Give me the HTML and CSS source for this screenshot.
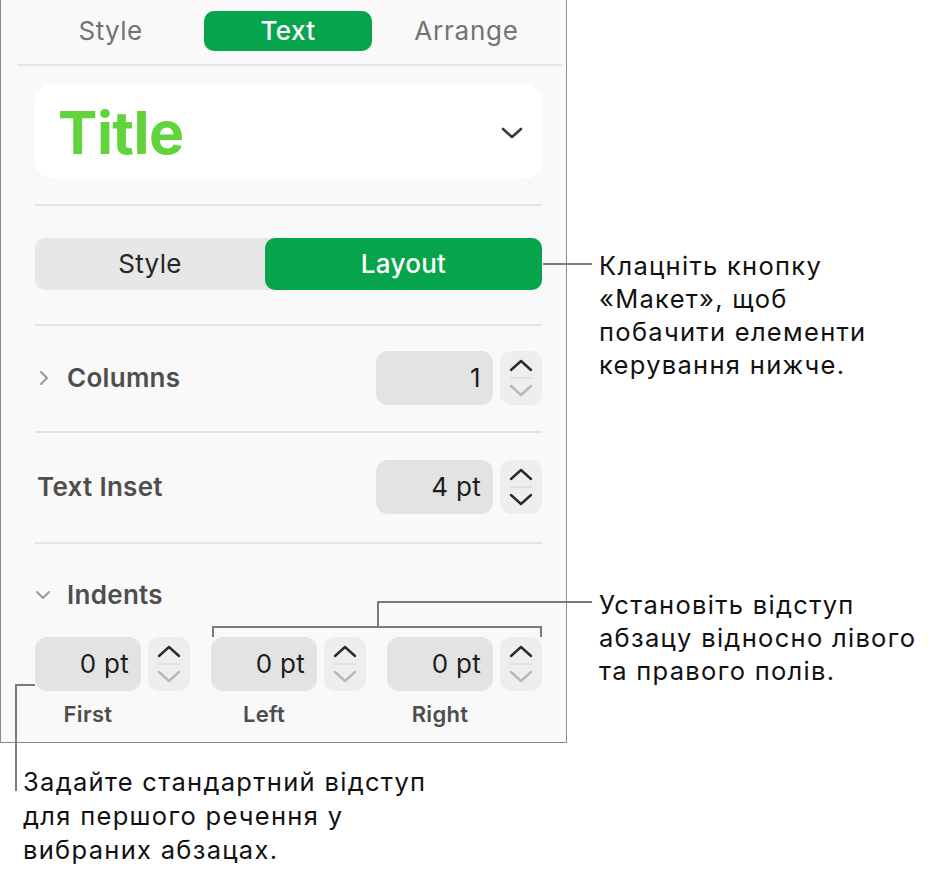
FILE: index.html
```html
<!DOCTYPE html>
<html>
<head>
<meta charset="utf-8">
<link rel="stylesheet" href="styles.css">
</head>
<body>
<div class="stage">
  <div class="panel">
    <div class="tabs">
      <div class="tab">Style</div>
      <div class="tab active">Text</div>
      <div class="tab">Arrange</div>
    </div>
    <div class="inner">
      <div class="title-box">
        <span class="title-text">Title</span>
        <svg class="title-chev" width="22" height="14" viewBox="0 0 22 14"><path d="M2 3 L11 11 L20 3" fill="none" stroke="#3a3a3a" stroke-width="2.6" stroke-linecap="round" stroke-linejoin="round"/></svg>
      </div>
      <div class="sep sep-a"></div>
      <div class="segmented">
        <div class="seg">Style</div>
        <div class="seg on">Layout</div>
      </div>
      <div class="sep sep-b"></div>
      <div class="row row-cols">
        <div class="row-label">
          <svg class="disc" width="14" height="16" viewBox="0 0 14 16"><path d="M4 2 L10 8 L4 14" fill="none" stroke="#9a9a9a" stroke-width="2" stroke-linecap="round" stroke-linejoin="round"/></svg>
          <span>Columns</span>
        </div>
        <div class="ctrl">
          <div class="field wide">1</div>
          <div class="stepper">
            <svg width="30" height="46" viewBox="0 0 30 46"><path d="M5 15 L15 6 L25 15" fill="none" stroke="#2b2b2b" stroke-width="2.4" stroke-linecap="round" stroke-linejoin="round"/><line x1="4" y1="23" x2="26" y2="23" stroke="#dcdcdc" stroke-width="1.5"/><path d="M5 31 L15 40 L25 31" fill="none" stroke="#b9b9b9" stroke-width="2.4" stroke-linecap="round" stroke-linejoin="round"/></svg>
          </div>
        </div>
      </div>
      <div class="sep sep-c"></div>
      <div class="row row-inset">
        <div class="row-label plain"><span>Text Inset</span></div>
        <div class="ctrl">
          <div class="field wide">4 pt</div>
          <div class="stepper">
            <svg width="30" height="46" viewBox="0 0 30 46"><path d="M5 15 L15 6 L25 15" fill="none" stroke="#2b2b2b" stroke-width="2.4" stroke-linecap="round" stroke-linejoin="round"/><line x1="4" y1="23" x2="26" y2="23" stroke="#dcdcdc" stroke-width="1.5"/><path d="M5 31 L15 40 L25 31" fill="none" stroke="#2b2b2b" stroke-width="2.4" stroke-linecap="round" stroke-linejoin="round"/></svg>
          </div>
        </div>
      </div>
      <div class="sep sep-d"></div>
      <div class="row-label indents">
        <svg class="disc" width="16" height="14" viewBox="0 0 16 14"><path d="M2 4 L8 10 L14 4" fill="none" stroke="#9a9a9a" stroke-width="2" stroke-linecap="round" stroke-linejoin="round"/></svg>
        <span>Indents</span>
      </div>
      <div class="indent-row">
        <div class="indent">
          <div class="ctrl">
            <div class="field small">0 pt</div>
            <div class="stepper">
              <svg width="30" height="46" viewBox="0 0 30 46"><path d="M5 15 L15 6 L25 15" fill="none" stroke="#2b2b2b" stroke-width="2.4" stroke-linecap="round" stroke-linejoin="round"/><line x1="4" y1="23" x2="26" y2="23" stroke="#dcdcdc" stroke-width="1.5"/><path d="M5 31 L15 40 L25 31" fill="none" stroke="#b9b9b9" stroke-width="2.4" stroke-linecap="round" stroke-linejoin="round"/></svg>
            </div>
          </div>
          <div class="cap">First</div>
        </div>
        <div class="indent">
          <div class="ctrl">
            <div class="field small">0 pt</div>
            <div class="stepper">
              <svg width="30" height="46" viewBox="0 0 30 46"><path d="M5 15 L15 6 L25 15" fill="none" stroke="#2b2b2b" stroke-width="2.4" stroke-linecap="round" stroke-linejoin="round"/><line x1="4" y1="23" x2="26" y2="23" stroke="#dcdcdc" stroke-width="1.5"/><path d="M5 31 L15 40 L25 31" fill="none" stroke="#b9b9b9" stroke-width="2.4" stroke-linecap="round" stroke-linejoin="round"/></svg>
            </div>
          </div>
          <div class="cap">Left</div>
        </div>
        <div class="indent">
          <div class="ctrl">
            <div class="field small">0 pt</div>
            <div class="stepper">
              <svg width="30" height="46" viewBox="0 0 30 46"><path d="M5 15 L15 6 L25 15" fill="none" stroke="#2b2b2b" stroke-width="2.4" stroke-linecap="round" stroke-linejoin="round"/><line x1="4" y1="23" x2="26" y2="23" stroke="#dcdcdc" stroke-width="1.5"/><path d="M5 31 L15 40 L25 31" fill="none" stroke="#b9b9b9" stroke-width="2.4" stroke-linecap="round" stroke-linejoin="round"/></svg>
            </div>
          </div>
          <div class="cap">Right</div>
        </div>
      </div>
    </div>
  </div>

  <svg class="leaders" width="932" height="881" viewBox="0 0 932 881">
    <g fill="none" stroke="#7a7a7a" stroke-width="2">
      <line x1="543" y1="264" x2="592" y2="264"/>
      <polyline points="213,637 213,627 541,627 541,637"/>
      <polyline points="378,627 378,602 592,602"/>
      <polyline points="35,685 16,685 16,791"/>
    </g>
  </svg>

  <div class="note note-layout">Клацніть кнопку<br>«Макет», щоб<br>побачити елементи<br>керування нижче.</div>
  <div class="note note-indent">Установіть відступ<br>абзацу відносно лівого<br>та правого полів.</div>
  <div class="note note-first">Задайте стандартний відступ<br>для першого речення у<br>вибраних абзацах.</div>
</div>
</body>
</html>
```

FILE: styles.css
```css
* { box-sizing: border-box; }
html, body { margin: 0; padding: 0; background: #ffffff; }
body {
  font-family: Inter, "Noto Sans", "Liberation Sans", sans-serif;
  color: #1d1d1f;
}
.stage {
  position: relative;
  width: 932px;
  height: 881px;
}
.panel {
  width: 567px;
  height: 743px;
  background: #f9f9f9;
  border-left: 1.5px solid #8a8a8a;
  border-right: 1.5px solid #8a8a8a;
  border-bottom: 1.5px solid #8a8a8a;
}
.tabs {
  display: flex;
  align-items: center;
  margin: 0 4px 0 16px;
  padding: 11px 0 13px;
  border-bottom: 2px solid #e4e4e4;
}
.tab {
  flex: 0 0 auto;
  height: 40px;
  line-height: 40px;
  font-size: 26px;
  letter-spacing: 0.4px;
  color: #737373;
  text-align: center;
}
.tab:nth-child(1) { width: 187px; }
.tab:nth-child(2) { width: 168px; }
.tab:nth-child(3) { width: 189px; letter-spacing: 0.8px; }
.tab.active {
  background: #06a54c;
  color: #fff;
  border-radius: 10px;
  font-weight: 500;
}
.inner {
  padding: 0 24px 0 34px;
}
.title-box {
  margin-top: 18px;
  height: 95px;
  background: #ffffff;
  border-radius: 18px;
  display: flex;
  align-items: center;
  justify-content: space-between;
  padding: 0 19px 0 23px;
}
.title-text {
  font-size: 59px;
  font-weight: 700;
  color: #62d43b;
  letter-spacing: -0.5px;
  line-height: 1;
  margin-top: 2px;
}
.title-chev { margin-top: 2px; }
.sep {
  height: 2px;
  background: #e4e4e4;
}
.sep-a { margin-top: 25px; }
.segmented {
  margin-top: 32px;
  height: 52px;
  display: flex;
  background: #e7e7e7;
  border-radius: 10px;
}
.seg {
  flex: 1;
  text-align: center;
  line-height: 52px;
  font-size: 26px;
  letter-spacing: 0.3px;
  color: #262626;
}
.seg:first-child { flex: 0 0 230px; }
.seg.on {
  background: #06a54c;
  color: #fff;
  border-radius: 10px;
  font-weight: 500;
}
.sep-b { margin-top: 34px; }
.row {
  display: flex;
  align-items: center;
  justify-content: space-between;
}
.row-cols { margin-top: 25px; }
.row-inset { margin-top: 27px; }
.row-label {
  display: flex;
  align-items: center;
  font-size: 26px;
  line-height: 30px;
  font-weight: 600;
  letter-spacing: 0.3px;
  color: #4e4e4e;
}
.row-label .disc { margin-left: 2px; margin-right: 16px; }
.row-label.plain { margin-left: 2px; }
.ctrl {
  display: flex;
  align-items: center;
  gap: 7px;
}
.field {
  height: 54px;
  background: #e3e3e3;
  border-radius: 12px;
  text-align: right;
  font-size: 26px;
  letter-spacing: 0.3px;
  line-height: 54px;
  color: #1d1d1d;
  padding-right: 12px;
}
.field.wide { width: 117px; }
.field.small { width: 106px; }
.stepper {
  width: 42px;
  height: 54px;
  background: #eeeeee;
  border-radius: 11px;
  display: flex;
  align-items: center;
  justify-content: center;
}
.sep-c { margin-top: 26px; }
.sep-d { margin-top: 28px; }
.indents { margin-top: 36px; height: 30px; }
.indents .disc { margin-left: 0; margin-right: 16px; }
.indent-row {
  margin-top: 27px;
  display: flex;
  justify-content: space-between;
}
.indent .ctrl { gap: 7px; }
.cap {
  text-align: center;
  width: 106px;
  margin-top: 9px;
  line-height: 28px;
  font-size: 22px;
  font-weight: 600;
  letter-spacing: 0.3px;
  color: #4e4e4e;
}
.leaders {
  position: absolute;
  left: 0;
  top: 0;
  pointer-events: none;
}
.note {
  position: absolute;
  font-size: 25.5px;
  letter-spacing: 1.3px;
  line-height: 33px;
  color: #111;
  white-space: nowrap;
}
.note-layout { left: 599px; top: 249px; }
.note-indent { left: 599px; top: 588px; }
.note-first { left: 23px; top: 765px; line-height: 34px; }
```
